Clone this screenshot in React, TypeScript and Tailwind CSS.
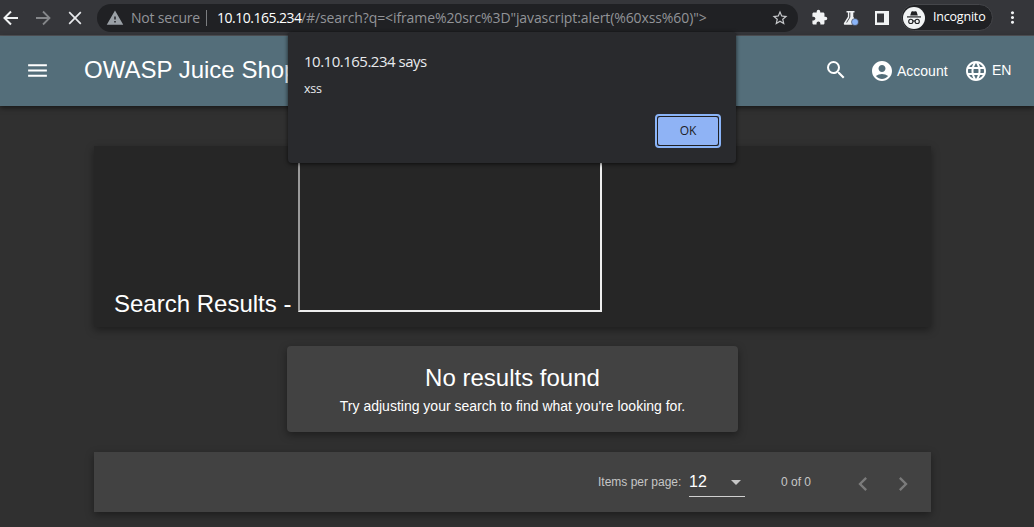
import React from "react";
import {
  MdAccountCircle,
  MdArrowDropDown,
  MdChevronLeft,
  MdChevronRight,
  MdExtension,
  MdLanguage,
  MdMenu,
  MdMoreVert,
  MdSearch,
  MdStarBorder,
  MdWarning,
} from "react-icons/md";

function FlaskIcon() {
  return (
    <svg viewBox="0 0 16 16" className="size-4 shrink-0">
      <path d="M3.5 1h8v1.6h-1.2v4.1l3.9 6.2c.5.9 0 1.9-1 1.9H2c-1 0-1.500-1-1-1.900l3.900-6.200V2.600H3.500z" fill="#eef0f2" />
      <path d="M6.300 2.600h1v4.700L4 12.600h-.9l3.200-5.200z" fill="#35363a" />
      <circle cx="12" cy="12" r="3.500" fill="#8ab4f8" stroke="#35363a" strokeWidth=".6" />
    </svg>
  );
}

function IncognitoIcon() {
  return (
    <svg viewBox="0 0 22 22" className="size-[22px] shrink-0">
      <circle cx="11" cy="11" r="11" fill="#f1f3f4" />
      <path d="M7.200 8.600 8.300 4.900c.2-.7.7-.9 1.300-.7l1.400.4 1.400-.4c.6-.2 1.100 0 1.300.7l1.100 3.700z" fill="#202124" />
      <path d="M4 9.900h14" stroke="#202124" strokeWidth="1.200" />
      <g fill="none" stroke="#202124" strokeWidth="1.100">
        <circle cx="7.800" cy="14.400" r="2.100" />
        <circle cx="14.200" cy="14.400" r="2.100" />
        <path d="M9.900 14.200q1.100-.7 2.200 0" />
      </g>
    </svg>
  );
}

function BrowserBar() {
  return (
    <div className="flex h-9 shrink-0 items-center border-b border-[#515357] bg-[#35363a] font-['Open_Sans','Noto_Sans',sans-serif]">
      <svg viewBox="0 0 16 16" className="ml-[3px] size-4 shrink-0" fill="none" stroke="#f1f3f4" strokeWidth="2">
        <path d="M15 8H2M8 1.500 1.500 8 8 14.500" />
      </svg>
      <svg viewBox="0 0 16 16" className="ml-4 size-4 shrink-0" fill="none" stroke="#85878a" strokeWidth="1.800">
        <path d="M1 8h13M8 1.500 14.500 8 8 14.500" />
      </svg>
      <svg viewBox="0 0 14 14" className="ml-[17px] size-3.5 shrink-0" fill="none" stroke="#e8eaed" strokeWidth="1.700">
        <path d="m1.200 1.200 11.600 11.600M12.800 1.200 1.200 12.800" />
      </svg>
      <div className="ml-[15px] flex h-7 w-[701px] shrink-0 items-center rounded-full bg-[#202124] pl-[9px] pr-[9px] text-[14px] leading-7 whitespace-nowrap text-[#929498]">
        <MdWarning className="size-[18px] shrink-0 text-[#9aa0a6]" />
        <span className="ml-[7px] w-[75px] tracking-[-0.2px]">Not secure</span>
        <span className="h-4 w-px bg-[#7b7d80]" />
        <span className="ml-[10px] w-[84px] tracking-[-0.500px] text-white">10.10.165.234</span>
        <span className="tracking-[-0.100px]">{'/#/search?q=<iframe%20src%3D"javascript:alert(%60xss%60)">'}</span>
        <MdStarBorder className="ml-auto size-[18px] shrink-0 text-[#c6c8cb]" />
      </div>
      <MdExtension className="ml-[13px] size-[17px] shrink-0 text-[#f1f3f4]" />
      <span className="ml-[15px] flex">
        <FlaskIcon />
      </span>
      <svg viewBox="0 0 14 14" className="ml-4 size-3.5 shrink-0">
        <path d="M0 0h14v14H0zM2 2.500v9h7v-9z" fill="#f1f3f4" fillRule="evenodd" />
      </svg>
      <div className="ml-[12px] flex h-[27px] w-[92px] shrink-0 items-center rounded-full border border-[#45464a] bg-[#202124] pl-px">
        <IncognitoIcon />
        <span className="ml-2 text-[12.500px] font-medium tracking-[-0.200px] text-white">Incognito</span>
      </div>
      <MdMoreVert className="ml-[10px] size-[19px] shrink-0 text-[#f1f3f4]" />
    </div>
  );
}

function Header() {
  return (
    <header className="z-10 flex h-[70px] shrink-0 items-center bg-[#546e7a] pl-[25px] text-white shadow-[0_2px_5px_rgba(0,0,0,0.5)]">
      <MdMenu className="mt-[-1px] size-[25px]" />
      <h1 className="mt-[-3px] ml-[34px] w-[740px] text-[24px] leading-8">OWASP Juice Shop</h1>
      <MdSearch className="mt-[-3px] size-6" />
      <div className="ml-[22px] flex items-center text-[14px]">
        <MdAccountCircle className="size-6" />
        <span className="ml-[3px] w-[67px]">Account</span>
        <MdLanguage className="size-6" />
        <span className="mt-[-1px] ml-[4px]">EN</span>
      </div>
    </header>
  );
}

function AlertDialog() {
  return (
    <div
      role="alertdialog"
      className="absolute top-8 left-72 z-20 flex h-[131px] w-[448px] flex-col rounded-[4px] bg-[#292a2d] px-4 font-['Open_Sans','Noto_Sans',sans-serif] text-[#e8eaed] shadow-[0_1px_4px_rgba(0,0,0,0.7)]"
    >
      <p className="mt-[18px] text-[15px] leading-[22px] tracking-[-0.500px]">10.10.165.234 says</p>
      <p className="mt-[8px] text-[12.500px] leading-[18px] tracking-[-0.300px]">xss</p>
      <button className="mt-[16px] mr-[-1px] flex h-[34px] w-[66px] self-end rounded-[4px] border-2 border-[#8ab4f8] bg-[#202124] p-px">
        <span className="flex size-full items-center justify-center rounded-[2px] bg-[#8fb3f5] text-[12px] text-[#202124]">OK</span>
      </button>
    </div>
  );
}

function Paginator() {
  return (
    <div className="mt-5 flex h-[60px] w-[837px] shrink-0 items-center justify-end bg-[#424242] pr-[14px] text-[12px] text-[#c6c6c6] shadow-[0_3px_8px_rgba(0,0,0,0.4)]">
      <span className="w-[91px]">Items per page:</span>
      <div className="mt-px flex h-[29px] w-14 items-center border-b border-[#d0d0d0] text-[16px] text-white">
        <span>12</span>
        <MdArrowDropDown className="mr-[-3px] ml-auto size-6 text-[#c6c6c6]" />
      </div>
      <span className="ml-[36px] w-[68px]">0 of 0</span>
      <MdChevronLeft className="mt-1 size-7 text-[#7b7b7b]" />
      <MdChevronRight className="mt-1 ml-3 size-7 text-[#7b7b7b]" />
    </div>
  );
}

export default function App() {
  return (
    <div className="relative flex h-[527px] w-[1034px] flex-col overflow-hidden bg-[#303030] font-['Liberation_Sans',Arial,sans-serif]">
      <BrowserBar />
      <Header />
      <main className="flex flex-col items-center pt-10 pr-[9px] text-white">
        <section className="flex h-[181px] w-[837px] shrink-0 items-end bg-[#262626] pb-[15px] pl-5 shadow-[0_3px_8px_rgba(0,0,0,0.4)]">
          <h2 className="mb-[-6px] w-[184px] text-[24px] leading-7">Search Results -</h2>
          <div className="h-[154px] w-[304px] border-2 border-t-[#9a9a9a] border-r-[#eeeeee] border-b-[#eeeeee] border-l-[#9a9a9a]" />
        </section>
        <section className="mt-[19px] flex h-[86px] w-[451px] shrink-0 flex-col items-center rounded-[4px] bg-[#424242] pt-4 shadow-[0_3px_8px_rgba(0,0,0,0.4)]">
          <h2 className="text-[24px] leading-8">No results found</h2>
          <p className="mt-[2px] text-[14px] leading-5">Try adjusting your search to find what you're looking for.</p>
        </section>
        <Paginator />
      </main>
      <AlertDialog />
    </div>
  );
}
